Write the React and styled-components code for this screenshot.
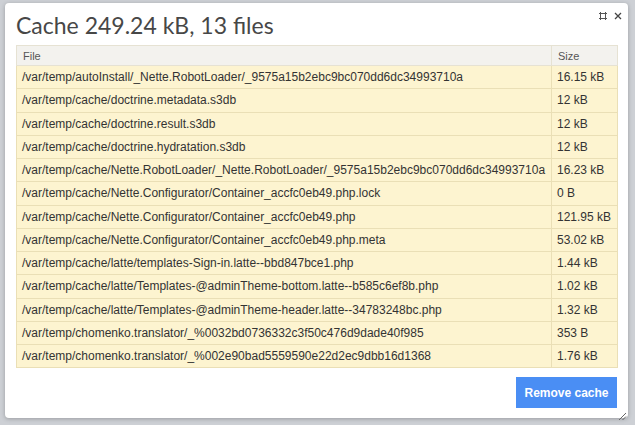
import React from 'react';
import styled, { createGlobalStyle } from 'styled-components';

const files = [
  ['/var/temp/autoInstall/_Nette.RobotLoader/_9575a15b2ebc9bc070dd6dc34993710a', '16.15 kB'],
  ['/var/temp/cache/doctrine.metadata.s3db', '12 kB'],
  ['/var/temp/cache/doctrine.result.s3db', '12 kB'],
  ['/var/temp/cache/doctrine.hydratation.s3db', '12 kB'],
  ['/var/temp/cache/Nette.RobotLoader/_Nette.RobotLoader/_9575a15b2ebc9bc070dd6dc34993710a', '16.23 kB'],
  ['/var/temp/cache/Nette.Configurator/Container_accfc0eb49.php.lock', '0 B'],
  ['/var/temp/cache/Nette.Configurator/Container_accfc0eb49.php', '121.95 kB'],
  ['/var/temp/cache/Nette.Configurator/Container_accfc0eb49.php.meta', '53.02 kB'],
  ['/var/temp/cache/latte/templates-Sign-in.latte--bbd847bce1.php', '1.44 kB'],
  ['/var/temp/cache/latte/Templates-@adminTheme-bottom.latte--b585c6ef8b.php', '1.02 kB'],
  ['/var/temp/cache/latte/Templates-@adminTheme-header.latte--34783248bc.php', '1.32 kB'],
  ['/var/temp/chomenko.translator/_%0032bd0736332c3f50c476d9dade40f985', '353 B'],
  ['/var/temp/chomenko.translator/_%002e90bad5559590e22d2ec9dbb16d1368', '1.76 kB'],
];

const App = () =>
  <>
    <GlobalStyle />
    <Dialog>
      <TitleBar>
        <Title>Cache 249.24 kB, 13 files</Title>
        <Controls>
          <ControlButton title="Maximize">
            <svg width="8" height="8" viewBox="0 0 8 8">
              <rect x="1.5" y="1.5" width="5" height="5" fill="none" stroke="#555" strokeWidth="1" />
              <path d="M0 1.5h8M0 6.5h8M1.5 0v8M6.5 0v8" stroke="#555" strokeWidth="1" />
            </svg>
          </ControlButton>
          <ControlButton title="Close">
            <svg width="8" height="8" viewBox="0 0 8 8">
              <path d="M1 1l6 6M7 1l-6 6" stroke="#444" strokeWidth="1.3" />
            </svg>
          </ControlButton>
        </Controls>
      </TitleBar>
      <Table>
        <thead>
          <tr>
            <HeadCell>File</HeadCell>
            <HeadCell narrow>Size</HeadCell>
          </tr>
        </thead>
        <tbody>
          {files.map(([name, size]) =>
            <tr key={name}>
              <Cell>{name}</Cell>
              <Cell>{size}</Cell>
            </tr>
          )}
        </tbody>
      </Table>
      <Footer>
        <RemoveButton>Remove cache</RemoveButton>
      </Footer>
      <Grip>
        <svg width="10" height="10" viewBox="0 0 10 10">
          <path d="M9 2L2 9M9 5.5L5.5 9" stroke="#666" strokeWidth="1" />
        </svg>
      </Grip>
    </Dialog>
  </>;

export default App;

const GlobalStyle = createGlobalStyle`
  html, body {
    margin: 0;
    background: #cdd0d5;
  }
  body {
    padding: 3px 7px 7px 5px;
    font-family: Arial, "Liberation Sans", sans-serif;
    color: #333;
  }
`;

const Dialog = styled.div`
  position: relative;
  box-sizing: border-box;
  display: flex;
  flex-direction: column;
  width: 623px;
  height: 415px;
  padding: 0 11px 10px 11px;
  background: #fff;
  border-radius: 4px;
  box-shadow: 0 1px 4px rgba(0, 0, 0, 0.25);
`;

const TitleBar = styled.div`
  display: flex;
  justify-content: space-between;
  align-items: flex-start;
  height: 42px;
`;

const Title = styled.h1`
  margin: 7px 0 0 0;
  font-family: Lato, "Open Sans", sans-serif;
  font-weight: 400;
  font-size: 23px;
  line-height: 30px;
  color: #474747;
`;

const Controls = styled.div`
  display: flex;
  gap: 6px;
  margin-top: 8px;
  margin-right: -5px;
`;

const ControlButton = styled.span`
  display: flex;
  align-items: center;
  justify-content: center;
  width: 9px;
  height: 9px;
  cursor: pointer;
`;

const Table = styled.table`
  width: 602px;
  border-collapse: collapse;
  font-size: 12px;
  border: 1px solid #e6ddb5;
`;

const HeadCell = styled.th`
  width: ${p => (p.narrow ? '53px' : 'auto')};
  height: 19px;
  padding: 0 6px;
  text-align: left;
  font-weight: 400;
  font-size: 11px;
  color: #555;
  background: #f3f2ee;
  border: 1px solid #e6e2d3;
`;

const Cell = styled.td`
  height: 22.25px;
  padding: 0 5px;
  line-height: 14px;
  white-space: nowrap;
  background: #fdf4d0;
  border: 1px solid #eadfb6;
`;

const Footer = styled.div`
  display: flex;
  justify-content: flex-end;
  margin-top: auto;
`;

const RemoveButton = styled.button`
  width: 101px;
  height: 31px;
  padding: 0;
  border: none;
  background: #4a8ef4;
  color: #fff;
  font-family: Arial, "Liberation Sans", sans-serif;
  font-weight: 700;
  font-size: 12px;
  cursor: pointer;
`;

const Grip = styled.div`
  position: absolute;
  right: 1px;
  bottom: 1px;
  width: 10px;
  height: 10px;
`;
